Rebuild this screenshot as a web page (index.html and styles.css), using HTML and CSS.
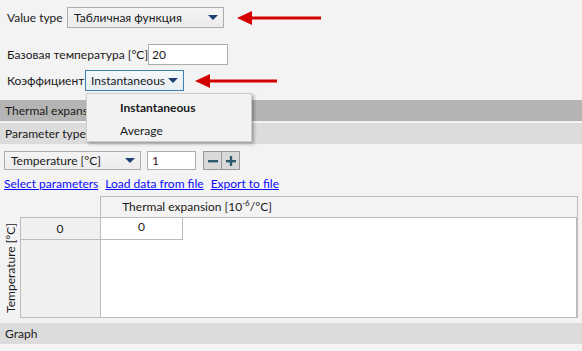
FILE: index.html
```html
<!DOCTYPE html>
<html lang="en">
<head>
  <meta charset="UTF-8" />
  <title>Thermal expansion</title>
  <link rel="stylesheet" href="styles.css">
</head>
<body>

  <!-- Top settings -->
  <div class="settings">
    <div class="row row-type">
      <span class="label">Value type</span>
      <div class="combo combo-type">Табличная функция<span class="caret"></span></div>
      <svg class="arrow arrow-1" width="84" height="14" viewBox="0 0 84 14">
        <polygon points="0,7 15,0 15,14" fill="#d40000"/>
        <rect x="14" y="5.5" width="70" height="3" fill="#d40000"/>
      </svg>
    </div>

    <div class="row row-base">
      <span class="label">Базовая температура [°C]</span>
      <div class="input input-base">20</div>
    </div>

    <div class="row row-coef">
      <span class="label">Коэффициент</span>
      <div class="combo combo-coef focused">Instantaneous<span class="caret"></span></div>
      <svg class="arrow arrow-2" width="82" height="14" viewBox="0 0 82 14">
        <polygon points="0,7 15,0 15,14" fill="#d40000"/>
        <rect x="14" y="5.5" width="68" height="3" fill="#d40000"/>
      </svg>
    </div>
  </div>

  <div class="bar bar-dark">Thermal expansion</div>
  <div class="bar bar-light">Parameter type</div>

  <!-- Parameter controls -->
  <div class="controls">
    <div class="combo combo-param">Temperature [°C]<span class="caret"></span></div>
    <div class="input input-count">1</div>
    <div class="spin">
      <button class="spin-btn" type="button">
        <svg width="10" height="10" viewBox="0 0 10 10"><rect x="0" y="4" width="10" height="2.4" fill="#2f5a6e"/></svg>
      </button>
      <button class="spin-btn" type="button">
        <svg width="10" height="10" viewBox="0 0 10 10"><rect x="0" y="4" width="10" height="2.4" fill="#2f5a6e"/><rect x="3.8" y="0" width="2.4" height="10" fill="#2f5a6e"/></svg>
      </button>
    </div>
  </div>

  <div class="links">
    <a href="#">Select parameters</a>
    <a href="#">Load data from file</a>
    <a href="#">Export to file</a>
  </div>

  <!-- Data table -->
  <div class="table">
    <div class="col-head"><span class="col-title">Thermal expansion [10<sup>-6</sup>/°C]</span></div>
    <div class="row-axis"><span>Temperature [°C]</span></div>
    <div class="table-body">
      <div class="row-head-col"></div>
      <div class="row-head">0</div>
      <div class="cell">0</div>
    </div>
  </div>

  <div class="bar bar-light bar-graph">Graph</div>

  <!-- Dropdown list for Коэффициент -->
  <div class="popup">
    <div class="popup-item selected">Instantaneous</div>
    <div class="popup-item">Average</div>
  </div>

</body>
</html>
```

FILE: styles.css
```css
* {
  box-sizing: border-box;
  margin: 0;
  padding: 0;
}

html, body {
  width: 100%;
  height: 100%;
}

body {
  position: relative;
  background: #f3f3f3;
  font-family: Lato, 'Noto Sans', sans-serif;
  font-size: 12px;
  color: #1a1a1a;
  overflow: hidden;
}

.settings {
  padding: 7px 0 0 7px;
}

.row {
  display: flex;
  align-items: center;
  height: 21px;
}

.row-base {
  margin-top: 16px;
}

.row-coef {
  margin-top: 5px;
}

.label {
  white-space: nowrap;
}

.row-type .label {
  width: 60px;
}

.row-base .label {
  width: 141px;
}

.row-coef .label {
  width: 78px;
}

.combo {
  position: relative;
  display: flex;
  align-items: center;
  height: 21px;
  padding-left: 6px;
  border: 1px solid #adadad;
  background: linear-gradient(#f4f4f4, #ececec);
  white-space: nowrap;
}

.combo.focused {
  border-color: #3c7fb1;
  background: linear-gradient(#f3f7fa, #e8eef3);
}

.caret {
  position: absolute;
  right: 5px;
  top: 7px;
  width: 0;
  height: 0;
  border-left: 5px solid transparent;
  border-right: 5px solid transparent;
  border-top: 5px solid #1d3f72;
}

.combo-type {
  width: 157px;
}

.combo-coef {
  width: 99px;
  padding-left: 5px;
}

.arrow-1 {
  margin-left: 13px;
}

.arrow-2 {
  margin-left: 11px;
}

.input {
  display: flex;
  align-items: center;
  height: 21px;
  padding-left: 3px;
  background: #fff;
  border: 1px solid #adadad;
}

.input-base {
  width: 80px;
}

.bar {
  height: 21px;
  line-height: 21px;
  padding-left: 5px;
  white-space: nowrap;
}

.bar-dark {
  margin-top: 9px;
  background: #b4b4b4;
}

.bar-light {
  background: #dcdcdc;
}

.bar-dark + .bar-light {
  margin-top: 2px;
}

.controls {
  display: flex;
  align-items: center;
  margin-top: 7px;
  padding-left: 4px;
  height: 19px;
}

.combo-param {
  width: 137px;
  height: 19px;
  padding-left: 6px;
}

.combo-param .caret {
  top: 6px;
}

.input-count {
  width: 49px;
  height: 19px;
  margin-left: 6px;
  padding-left: 4px;
  color: #3a0f1f;
}

.spin {
  display: flex;
  margin-left: 7px;
}

.spin-btn {
  display: flex;
  align-items: center;
  justify-content: center;
  width: 19px;
  height: 19px;
  border: 1px solid #9a9a9a;
  background: #d9d9d9;
}

.spin-btn + .spin-btn {
  margin-left: -1px;
}

.links {
  display: flex;
  gap: 7px;
  padding-left: 4px;
  margin-top: 6px;
  height: 16px;
  line-height: 16px;
}

.links a {
  color: #0a0aff;
  text-decoration: underline;
}

.table {
  display: grid;
  grid-template-columns: 20px 80px 1fr;
  grid-template-rows: 21px 101px;
  margin: 4px 4px 0 0;
}

.col-head {
  grid-column: 3;
  grid-row: 1;
  border: 1px solid #bcbcbc;
  border-bottom: 0;
  background: #f3f3f3;
}

.col-title {
  display: block;
  width: 192px;
  line-height: 20px;
  text-align: center;
}

.col-title sup {
  font-size: 8px;
  vertical-align: 5px;
  line-height: 0;
}

.row-axis {
  grid-column: 1;
  grid-row: 2;
  display: flex;
  align-items: center;
  justify-content: center;
}

.row-axis span {
  writing-mode: vertical-rl;
  transform: rotate(180deg);
  white-space: nowrap;
}

.table-body {
  grid-column: 2 / 4;
  grid-row: 2;
  display: grid;
  grid-template-columns: 80px 82px 1fr;
  grid-template-rows: 22px 1fr;
  border: 1px solid #bcbcbc;
  border-right-width: 2px;
  background: #fff;
}

.row-head-col {
  grid-column: 1;
  grid-row: 1 / 3;
  background: #f0f0f0;
  border-right: 1px solid #bcbcbc;
}

.row-head {
  grid-column: 1;
  grid-row: 1;
  border-right: 1px solid #bcbcbc;
  border-bottom: 1px solid #bcbcbc;
  text-align: center;
  line-height: 21px;
  padding-right: 1px;
}

.cell {
  grid-column: 2;
  grid-row: 1;
  border-right: 1px solid #bcbcbc;
  border-bottom: 1px solid #bcbcbc;
  text-align: center;
  line-height: 18px;
}

.bar-graph {
  margin-top: 5px;
}

.popup {
  position: absolute;
  left: 86px;
  top: 93px;
  width: 166px;
  height: 49px;
  padding-top: 2px;
  background: #f2f2f2;
  border: 1px solid #cccccc;
  box-shadow: 2px 2px 3px rgba(0, 0, 0, 0.3);
}

.popup-item {
  height: 23px;
  line-height: 23px;
  padding-left: 33px;
}

.popup-item.selected {
  font-weight: bold;
}
```
